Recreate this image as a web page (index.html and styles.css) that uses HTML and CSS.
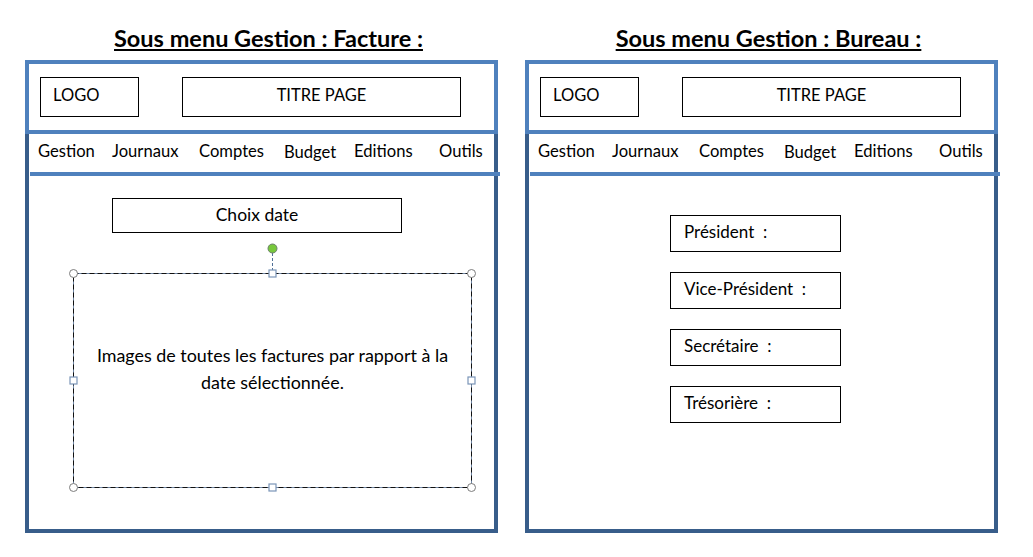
FILE: index.html
```html
<!DOCTYPE html>
<html lang="fr">
<head>
<meta charset="utf-8">
<title>Sous menu Gestion</title>
<link rel="stylesheet" href="styles.css">
</head>
<body>
<div class="page">
  <section class="col">
    <h1 class="title"><span>Sous menu Gestion : Facture :</span></h1>
    <div class="frame">
      <div class="head">
        <div class="logo">LOGO</div>
        <div class="titre">TITRE PAGE</div>
      </div>
      <div class="body">
        <nav class="menu">
          <span>Gestion</span><span>Journaux</span><span>Comptes</span><span class="low">Budget</span><span>Editions</span><span>Outils</span>
        </nav>
        <div class="menuline"></div>
        <div class="facture">
          <div class="choix">Choix date</div>
          <div class="sel">
            <svg class="handles" width="399" height="215" viewBox="0 0 399 215" aria-hidden="true">
              <rect x="0.5" y="0.5" width="398" height="214" fill="none" stroke="#6f85a3" stroke-width="1"/>
              <rect x="0.5" y="0.5" width="398" height="214" fill="none" stroke="#111" stroke-width="1" stroke-dasharray="5 3"/>
              <line x1="199.5" y1="-20" x2="199.5" y2="-3" stroke="#4f6f96" stroke-width="1" stroke-dasharray="3 2"/>
              <circle cx="199.5" cy="-24.5" r="4.5" fill="#78c83c" stroke="#6b7f6b" stroke-width="1"/>
              <circle cx="0.5" cy="0.5" r="4" fill="#fff" stroke="#7d7d7d" stroke-width="1"/>
              <circle cx="398.5" cy="0.5" r="4" fill="#fff" stroke="#7d7d7d" stroke-width="1"/>
              <circle cx="0.5" cy="214.5" r="4" fill="#fff" stroke="#7d7d7d" stroke-width="1"/>
              <circle cx="398.5" cy="214.5" r="4" fill="#fff" stroke="#7d7d7d" stroke-width="1"/>
              <rect x="196" y="-3" width="7" height="7" fill="#fff" stroke="#7b95b8" stroke-width="1.2"/>
              <rect x="196" y="211" width="7" height="7" fill="#fff" stroke="#7b95b8" stroke-width="1.2"/>
              <rect x="-3" y="104" width="7" height="7" fill="#fff" stroke="#7b95b8" stroke-width="1.2"/>
              <rect x="395" y="104" width="7" height="7" fill="#fff" stroke="#7b95b8" stroke-width="1.2"/>
            </svg>
            <p class="seltext">Images de toutes les factures par rapport à la<br>date sélectionnée.</p>
          </div>
        </div>
      </div>
    </div>
  </section>
  <section class="col">
    <h1 class="title"><span>Sous menu Gestion : Bureau :</span></h1>
    <div class="frame">
      <div class="head">
        <div class="logo">LOGO</div>
        <div class="titre">TITRE PAGE</div>
      </div>
      <div class="body">
        <nav class="menu">
          <span>Gestion</span><span>Journaux</span><span>Comptes</span><span class="low">Budget</span><span>Editions</span><span>Outils</span>
        </nav>
        <div class="menuline"></div>
        <div class="bureau">
          <div class="role r1">Président&nbsp; :</div>
          <div class="role">Vice-Président&nbsp; :</div>
          <div class="role">Secrétaire&nbsp; :</div>
          <div class="role">Trésorière&nbsp; :</div>
        </div>
      </div>
    </div>
  </section>
</div>
</body>
</html>
```

FILE: styles.css
```css
* { box-sizing: border-box; }
html, body { margin: 0; padding: 0; background: #fff; }
body {
  font-family: Lato, "Open Sans", sans-serif;
  color: #000;
  width: 1033px;
  height: 557px;
  overflow: hidden;
}
.page {
  display: flex;
  gap: 27px;
  padding-left: 25px;
}
.col {
  width: 473px;
  display: flex;
  flex-direction: column;
}
.title {
  margin: 0;
  height: 60px;
  padding-top: 24px;
  padding-left: 14px;
  text-align: center;
  font-size: 23.5px;
  font-weight: 700;
  line-height: 29px;
}
.title span {
  text-decoration: underline;
  text-decoration-thickness: 2px;
  text-underline-offset: 2px;
}
.frame {
  width: 473px;
}
.head {
  height: 74px;
  border: 4px solid #4f81bd;
  display: flex;
  align-items: center;
  padding-left: 11px;
  gap: 43px;
  font-size: 16.5px;
}
.logo {
  width: 99px;
  height: 40px;
  border: 1px solid #000;
  padding-left: 12px;
  display: flex;
  align-items: center;
  padding-bottom: 5px;
}
.titre {
  width: 279px;
  height: 40px;
  border: 1px solid #000;
  display: flex;
  align-items: center;
  justify-content: center;
  padding-bottom: 5px;
}
.body {
  height: 399px;
  border: 4px solid #385d8a;
  border-top: 0;
}
.menu {
  height: 38px;
  display: grid;
  grid-template-columns: 74px 87px 85px 70px 85px auto;
  align-items: center;
  padding-left: 9px;
  padding-bottom: 5px;
  font-size: 16.6px;
}
.menu .low { padding-top: 3px; }
.menuline {
  height: 4px;
  background: #4f81bd;
  margin-left: 1px;
  margin-right: -6px;
}
.facture {
  padding-left: 44px;
  padding-top: 22px;
  font-size: 17.5px;
}
.choix {
  width: 290px;
  height: 35px;
  margin-left: 39px;
  border: 1px solid #000;
  display: flex;
  align-items: center;
  justify-content: center;
  padding-bottom: 2px;
}
.sel {
  position: relative;
  width: 399px;
  height: 215px;
  margin-top: 40px;
  display: flex;
  align-items: center;
  justify-content: center;
  padding-bottom: 24px;
}
.handles {
  position: absolute;
  left: 0;
  top: 0;
  overflow: visible;
}
.seltext {
  margin: 0;
  text-align: center;
  line-height: 27px;
  font-size: 17.9px;
}
.bureau {
  padding-top: 39px;
  padding-left: 141px;
  display: flex;
  flex-direction: column;
  gap: 20px;
  font-size: 17px;
}
.role {
  width: 171px;
  height: 37px;
  border: 1px solid #000;
  display: flex;
  align-items: center;
  padding-left: 13px;
  padding-bottom: 5px;
}
```
